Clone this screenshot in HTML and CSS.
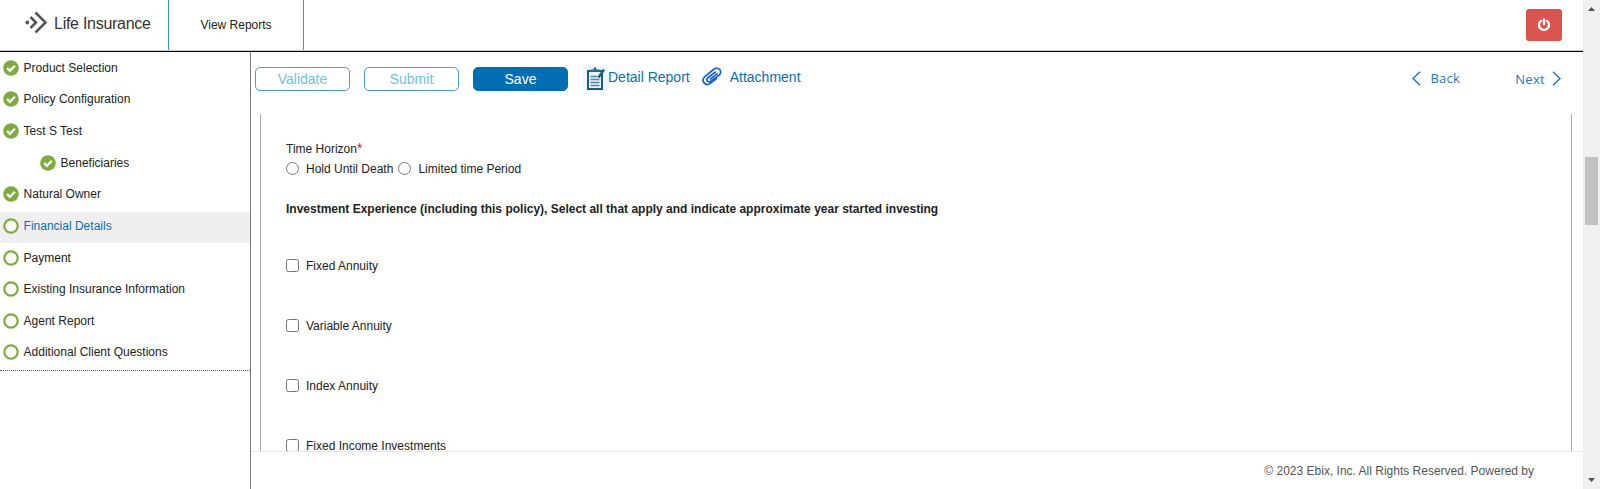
FILE: index.html
```
<!DOCTYPE html>
<html lang="en">
<head>
<meta charset="utf-8">
<title>Life Insurance</title>
<link rel="stylesheet" href="styles.css">
</head>
<body>
<svg class="defs" width="0" height="0" aria-hidden="true">
  <symbol id="done" viewBox="0 0 16 16"><circle cx="8" cy="8" r="7.8" fill="#7eab41"/><path d="M4.1 8l2.8 2.8 5-5" fill="none" stroke="#fff" stroke-width="2.3"/></symbol>
  <symbol id="open" viewBox="0 0 16 16"><circle cx="8" cy="8" r="6.7" fill="#fff" fill-opacity=".8" stroke="#7eab41" stroke-width="2.2"/></symbol>
</svg>
<div class="app">
  <div class="page">
    <header class="header">
      <div class="brand">
        <svg width="24" height="24" viewBox="0 0 24 24" fill="none" stroke="#555" stroke-width="2.5"><circle cx="2.3" cy="11.5" r="1.9" fill="#555" stroke="none"/><path d="M5.500 6l5.500 5.500L5.500 17M10.500 1.500l10 10-10 10"/></svg>
        <span class="brand-name">Life Insurance</span>
      </div>
      <a class="reports">View Reports</a>
      <button class="power" aria-label="Log out"><svg width="14" height="14" viewBox="0 0 14 14" fill="none" stroke="#fff" stroke-width="2.3" stroke-linecap="round"><path d="M4 2.900a5 5 0 1 0 6 0M7 1.300v5"/></svg></button>
    </header>
    <div class="body">
      <nav class="side">
        <a class="step"><svg><use href="#done"/></svg><span>Product Selection</span></a>
        <a class="step"><svg><use href="#done"/></svg><span>Policy Configuration</span></a>
        <a class="step"><svg><use href="#done"/></svg><span>Test S Test</span></a>
        <a class="step child"><svg><use href="#done"/></svg><span>Beneficiaries</span></a>
        <a class="step"><svg><use href="#done"/></svg><span>Natural Owner</span></a>
        <a class="step active"><svg><use href="#open"/></svg><span>Financial Details</span></a>
        <a class="step"><svg><use href="#open"/></svg><span>Payment</span></a>
        <a class="step"><svg><use href="#open"/></svg><span>Existing Insurance Information</span></a>
        <a class="step"><svg><use href="#open"/></svg><span>Agent Report</span></a>
        <a class="step"><svg><use href="#open"/></svg><span>Additional Client Questions</span></a>
      </nav>
      <main class="main">
        <div class="toolbar">
          <button class="btn">Validate</button>
          <button class="btn">Submit</button>
          <button class="btn save">Save</button>
          <a class="link report"><svg width="25" height="25" viewBox="0 0 25 25"><path fill="#f0f4f5" d="M0 0h25v25H0z"/><path d="M5 5h14v18H5z" fill="#e9f1f3" stroke="#1b5d80" stroke-width="2"/><path d="M7.500 6V3.500h3c0-3 3-3 3 0h3V6z" fill="#246c8e"/><path d="M7.500 10.500h7M7.500 13.500h9M7.500 16.500h9M7.500 19.500h9" stroke="#53889e" stroke-width="1.300"/><path d="M21 3.500l-5.500 8" stroke="#176183" stroke-width="2.400"/></svg><span>Detail Report</span></a>
          <a class="link attach"><svg width="20" height="19" viewBox="0 0 20 19" fill="none" stroke="#1461c8" stroke-width="1.700" stroke-linecap="round" stroke-linejoin="round"><path d="M14.500 11.500L8.200 16.400C3.500 19.800-1.500 13.800 2.600 9.800L11.500 2.500c4.300-3.600 9.800 1.600 5.700 5.600L8.800 14.100c-2.800 1.900-5.300-1.100-3-3.300L13.200 5.200"/><path d="M8.500 12l6.700-5.200"/></svg><span>Attachment</span></a>
          <div class="pager">
            <a class="page-link"><svg width="9" height="15" viewBox="0 0 9 15"><path d="M8 .7L1 7.500l7 6.800"/></svg><span class="back">Back</span></a>
            <a class="page-link"><span>Next</span><svg width="9" height="15" viewBox="0 0 9 15"><path d="M1 .7l7 6.800-7 6.800"/></svg></a>
          </div>
        </div>
        <section class="panel">
          <div class="label">Time Horizon<span class="req">*</span></div>
          <div class="radios">
            <label><input type="radio" name="h"><span>Hold Until Death</span></label>
            <label><input type="radio" name="h"><span>Limited time Period</span></label>
          </div>
          <h2 class="title">Investment Experience (including this policy), Select all that apply and indicate approximate year started investing</h2>
          <div class="checks">
            <label><input type="checkbox"><span>Fixed Annuity</span></label>
            <label><input type="checkbox"><span>Variable Annuity</span></label>
            <label><input type="checkbox"><span>Index Annuity</span></label>
            <label><input type="checkbox"><span>Fixed Income Investments</span></label>
          </div>
        </section>
        <footer class="footer">© 2023 Ebix, Inc. All Rights Reserved. Powered by</footer>
      </main>
    </div>
  </div>
  <div class="scroll">
    <svg width="7" height="4" viewBox="0 0 7 4"><path d="M0 4L3.500 0 7 4z"/></svg>
    <div class="thumb"></div>
    <svg class="down" width="7" height="4" viewBox="0 0 7 4"><path d="M0 0l3.500 4L7 0z"/></svg>
  </div>
</div>
</body>
</html>
```
FILE: styles.css
```
* { box-sizing: border-box; }
body { margin: 0; font: 12px/16px "Liberation Sans", Arial, sans-serif; color: #222; background: #fff; overflow: hidden; }
button { font: inherit; padding: 0; margin: 0; }
.defs { display: none; }
svg { display: block; flex: none; }
.app { display: flex; height: 489px; }
.page { width: 1583px; display: flex; flex-direction: column; }
.header { height: 52px; display: flex; border-bottom: 1px solid #000; box-shadow: inset 0 -1px #ccc; padding-bottom: 1px; }
.brand { width: 169px; border-right: 1px solid #2e97d0; padding: 11px 0 0 25px; display: flex; gap: 5px; }
.brand-name { font-size: 16px; line-height: 24px; letter-spacing: -.27px; color: #333; white-space: nowrap; padding-top: 1px; }
.reports { width: 135px; border-right: 1px solid #2e97d0; text-align: center; line-height: 50px; }
.power { width: 36px; height: 32px; margin: 9px 21px 0 auto; border: 0; border-radius: 3px; background: #d9534f; display: flex; align-items: center; justify-content: center; }
.body { flex: 1; display: flex; min-height: 0; }
.side { width: 251px; border-right: 1px solid #777; padding-top: 1.300px; }
.step { height: 31.700px; display: flex; align-items: center; gap: 5px; padding: 0 0 3px 2.600px; }
.step svg { width: 16px; height: 16px; }
.step:last-child { height: 32.700px; padding-bottom: 4px; border-bottom: 1px dotted #555; }
.step.child { padding-left: 39.600px; }
.active { background: #efefef; color: #0770b4; }
.main { flex: 1; display: flex; flex-direction: column; min-width: 0; }
.toolbar { height: 62px; padding: 15px 22px 0 4px; display: flex; align-items: flex-start; }
.btn { width: 95px; height: 24px; margin-right: 14px; border: 1px solid #4b9dd0; border-radius: 5px; background: #fff; color: #6ec1df; font-size: 14px; }
.save { background: #006eb2; border-color: #006eb2; color: #fff; }
.link { display: flex; color: #0770b4; font-size: 14px; line-height: 20px; white-space: nowrap; }
.report { margin: -1px 12px 0 1px; gap: 0; }
.report span { padding-top: 1px; }
.attach { gap: 8px; }
.pager { margin-left: auto; display: flex; gap: 55px; padding-top: 3px; }
.page-link { display: flex; gap: 9px; color: #2676c5; font: 13px/16px "Open Sans", sans-serif; letter-spacing: .3px; }
.page-link svg { margin-top: 1px; fill: none; stroke: #2676c5; stroke-width: 1.500; }
.page-link:last-child { gap: 7px; }
.page-link:last-child span { padding-top: 1px; }
.panel { height: 337px; margin: 0 11px 0 9px; padding: 26px 0 0 25px; border: solid #aaa; border-width: 0 1px; overflow: hidden; }
.label { line-height: 18px; }
.req { color: red; font-size: 14px; line-height: 10px; }
.radios { display: flex; gap: 5px; height: 20px; }
.radios span { padding-top: 1px; }
label { display: flex; align-items: center; }
input { width: 13px; height: 13px; margin: 0 7px 0 0; flex: none; }
.title { font-size: 12px; line-height: 16px; margin: 23px 0 0; white-space: nowrap; }
.checks { display: flex; flex-direction: column; gap: 44px; margin-top: 41px; }
.checks label { height: 16px; }
.checks input { margin-bottom: 2px; }
.footer { flex: 1; border-top: 1px solid #e9e9e9; color: #555; text-align: right; padding: 11px 49px 0 0; }
.scroll { width: 17px; background: #f0f0f0; padding: 7px 0; display: flex; flex-direction: column; align-items: center; fill: #505050; }
.thumb { width: 13px; height: 68px; margin-top: 146px; background: #c1c1c1; }
.down { margin-top: auto; }
```
